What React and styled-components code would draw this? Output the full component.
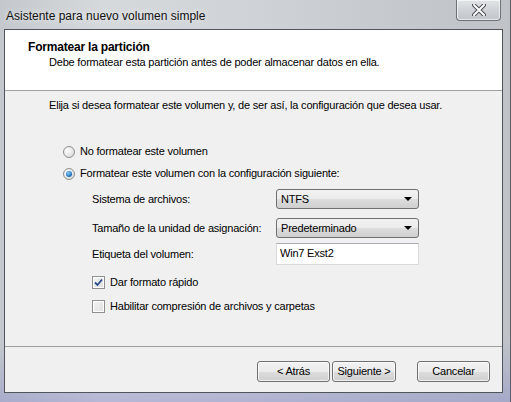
import React from 'react'
import styled, { createGlobalStyle } from 'styled-components'

const Global = createGlobalStyle`
  html, body { margin: 0; padding: 0; }
  body {
    font-family: "Liberation Sans", Arial, sans-serif;
    font-size: 11px;
    letter-spacing: -0.2px;
    color: #000;
    background: #8a9096;
  }
`

const Frame = styled.div`
  width: 511px;
  height: 402px;
  box-sizing: border-box;
  display: flex;
  flex-direction: column;
  padding: 0 7px 9px 4px;
  background:
    linear-gradient(180deg, rgba(255,255,255,0) 85%, rgba(120,120,200,0.35) 100%),
    linear-gradient(90deg, #c4c8cc 0%, #d6d9dc 20%, #cfd2d6 50%, #c6cacf 75%, #bfc3c8 100%);
  border-right: 1px solid #5b6066;
`

const TitleBar = styled.div`
  height: 29px;
  display: flex;
  align-items: flex-start;
  justify-content: space-between;
`

const Caption = styled.div`
  padding: 9px 0 0 2px;
  font-size: 12px;
  letter-spacing: 0;
  color: #111;
  text-shadow: 0 0 6px rgba(255,255,255,0.9);
`

const CloseButton = styled.div`
  width: 45px;
  height: 21px;
  margin-right: 2px;
  box-sizing: border-box;
  border: 1px solid #6d7277;
  border-top: none;
  border-radius: 0 0 4px 4px;
  background: linear-gradient(180deg, #e2e5e8 0%, #cfd3d7 50%, #c2c6cb 100%);
  box-shadow: inset 0 0 0 1px rgba(255,255,255,0.6);
  display: flex;
  align-items: center;
  justify-content: center;
`

const Client = styled.div`
  flex: 1;
  display: flex;
  flex-direction: column;
  background: #f0f0f0;
  border: 1px solid #4f555b;
`

const Header = styled.div`
  height: 61px;
  flex-shrink: 0;
  background: #fff;
  border-bottom: 1px solid #a0a0a0;
  padding: 10px 0 0 23px;
  box-sizing: border-box;
`

const HeaderTitle = styled.div`
  font-weight: bold;
  font-size: 12px;
  line-height: 15px;
`

const HeaderText = styled.div`
  padding-left: 21px;
  line-height: 15px;
`

const Body = styled.div`
  flex: 1;
  padding: 7px 0 0 44px;
  display: flex;
  flex-direction: column;
`

const Line = styled.div`
  line-height: 15px;
  margin-top: ${p => p.$top || 0}px;
`

const Option = styled.label`
  display: flex;
  align-items: center;
  gap: 5px;
  height: 15px;
  line-height: 15px;
  margin-left: ${p => p.$indent || 0}px;
  margin-top: ${p => p.$top || 0}px;
`

const RadioDot = styled.span`
  width: 12px;
  height: 12px;
  box-sizing: border-box;
  border-radius: 50%;
  border: 1px solid #8e8f8f;
  background: radial-gradient(circle at 35% 35%, #fdfdfd 0%, #e6e6e6 55%, #cfcfcf 100%);
  display: flex;
  align-items: center;
  justify-content: center;
  &::after {
    content: '';
    display: ${p => (p.$on ? 'block' : 'none')};
    width: 6px;
    height: 6px;
    border-radius: 50%;
    background: radial-gradient(circle at 40% 35%, #8fd0f6 0%, #2a7dc2 55%, #0e3f7c 100%);
  }
`

const Box = styled.span`
  width: 13px;
  height: 13px;
  box-sizing: border-box;
  border: 1px solid #8e8f8f;
  background: linear-gradient(135deg, #f4f4f4 0%, #dedede 100%);
  box-shadow: inset 0 0 0 1px #fff;
  display: flex;
  align-items: center;
  justify-content: center;
`

const Form = styled.div`
  display: grid;
  grid-template-columns: 184px 143px;
  align-items: center;
  margin: 8px 0 0 43px;
`

const FieldLabel = styled.div`
  line-height: 15px;
  white-space: nowrap;
  margin-top: ${p => p.$top || 0}px;
`

const Combo = styled.div`
  height: 20px;
  box-sizing: border-box;
  border: 1px solid #707070;
  border-radius: 3px;
  background: linear-gradient(180deg, #f2f2f2 0%, #ebebeb 50%, #dddddd 51%, #cfcfcf 100%);
  display: flex;
  align-items: center;
  justify-content: space-between;
  padding: 0 6px 0 4px;
  margin-top: ${p => p.$top || 0}px;
`

const Arrow = styled.span`
  width: 0;
  height: 0;
  border-left: 4px solid transparent;
  border-right: 4px solid transparent;
  border-top: 4px solid #000;
`

const TextBox = styled.div`
  height: 22px;
  box-sizing: border-box;
  border: 1px solid #dadada;
  border-top-color: #abadb3;
  background: #fff;
  padding: 3px 0 0 3px;
  margin-top: ${p => p.$top || 0}px;
`

const Footer = styled.div`
  height: 46px;
  flex-shrink: 0;
  border-top: 1px solid #a0a0a0;
  display: flex;
  align-items: flex-start;
  justify-content: flex-end;
  padding: 14px 12px 0 0;
  box-sizing: border-box;
`

const Button = styled.div`
  width: ${p => p.$w || 73}px;
  height: 21px;
  box-sizing: border-box;
  margin-left: ${p => p.$gap || 0}px;
  border: 1px solid #707070;
  border-radius: 3px;
  background: linear-gradient(180deg, #f2f2f2 0%, #ebebeb 50%, #dddddd 51%, #cfcfcf 100%);
  box-shadow: inset 0 0 0 1px rgba(255,255,255,0.7);
  display: flex;
  align-items: center;
  justify-content: center;
  line-height: 15px;
`

const CloseIcon = () => (
  <svg width="14" height="12" viewBox="0 0 14 12">
    <path d="M2 1 L12 11 M12 1 L2 11" stroke="#4a4f55" strokeWidth="4" strokeLinecap="round" />
    <path d="M2 1 L12 11 M12 1 L2 11" stroke="#fff" strokeWidth="2" strokeLinecap="round" />
  </svg>
)

const Check = () => (
  <svg width="9" height="9" viewBox="0 0 9 9">
    <path d="M1 4.5 L3.5 7 L8 1.5" fill="none" stroke="#2a4c8c" strokeWidth="1.8" />
  </svg>
)

export default function App() {
  return (
    <>
      <Global />
      <Frame>
        <TitleBar>
          <Caption>Asistente para nuevo volumen simple</Caption>
          <CloseButton><CloseIcon /></CloseButton>
        </TitleBar>
        <Client>
          <Header>
            <HeaderTitle>Formatear la partición</HeaderTitle>
            <HeaderText>Debe formatear esta partición antes de poder almacenar datos en ella.</HeaderText>
          </Header>
          <Body>
            <Line>Elija si desea formatear este volumen y, de ser así, la configuración que desea usar.</Line>
            <Option $indent={14} $top={31}><RadioDot />No formatear este volumen</Option>
            <Option $indent={14} $top={7}><RadioDot $on />Formatear este volumen con la configuración siguiente:</Option>
            <Form>
              <FieldLabel>Sistema de archivos:</FieldLabel>
              <Combo>NTFS<Arrow /></Combo>
              <FieldLabel $top={9}>Tamaño de la unidad de asignación:</FieldLabel>
              <Combo $top={9}>Predeterminado<Arrow /></Combo>
              <FieldLabel $top={5}>Etiqueta del volumen:</FieldLabel>
              <TextBox $top={5}>Win7 Exst2</TextBox>
            </Form>
            <Option $indent={43} $top={10}><Box><Check /></Box>Dar formato rápido</Option>
            <Option $indent={43} $top={9}><Box />Habilitar compresión de archivos y carpetas</Option>
          </Body>
          <Footer>
            <Button>&lt; Atrás</Button>
            <Button $gap={2} $w={64}>Siguiente &gt;</Button>
            <Button $gap={21} $w={73}>Cancelar</Button>
          </Footer>
        </Client>
      </Frame>
    </>
  )
}
